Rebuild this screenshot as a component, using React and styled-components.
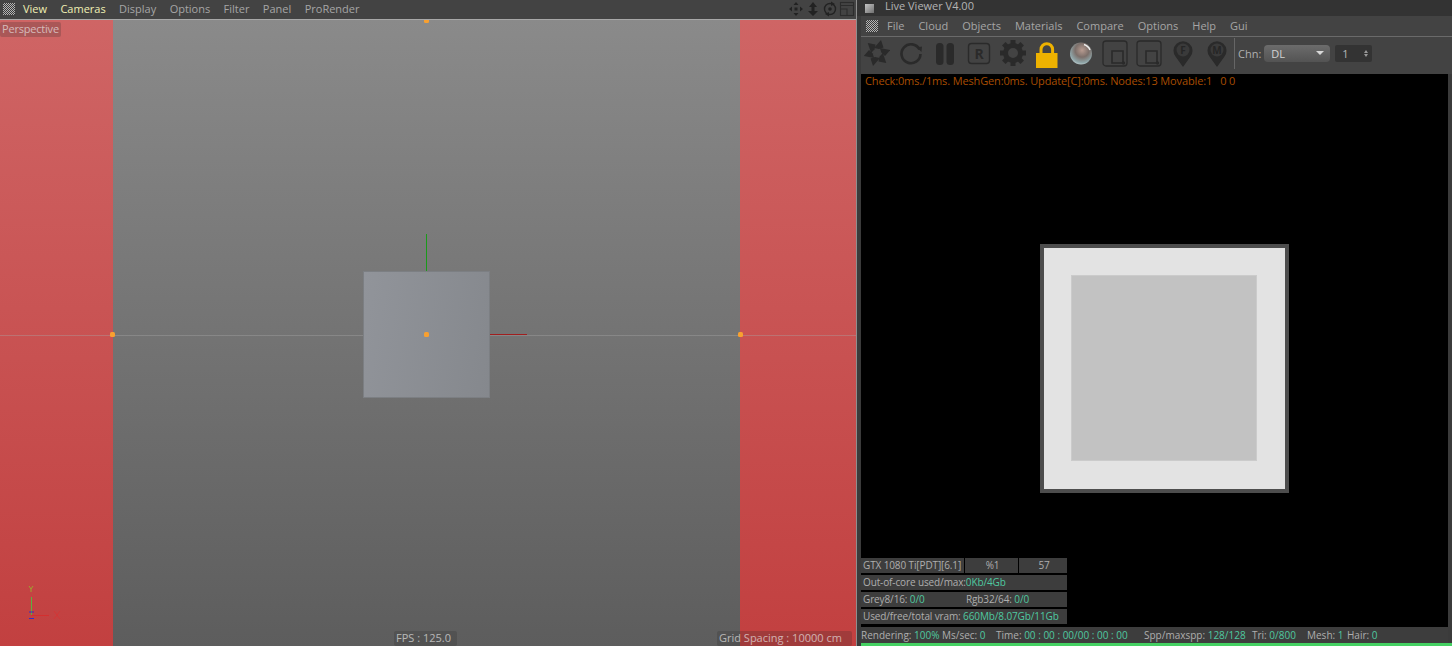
import styled, { createGlobalStyle } from "styled-components";

const GlobalStyle = createGlobalStyle`
  html, body {
    margin: 0;
    padding: 0;
    height: 646px;
    overflow: hidden;
    background: #3a3a3a;
  }
  * { box-sizing: border-box; }
`;

const Page = styled.div`
  display: flex;
  width: 1452px;
  height: 646px;
  font-family: "Open Sans", "Liberation Sans", sans-serif;
  font-size: 11px;
  color: #aaa;
  background: #3b3b3b;
`;

/* left: the 3d viewport */
const LeftPane = styled.div`
  display: flex;
  flex-direction: column;
  width: 857px;
  height: 646px;
  border-right: 1px solid #8e8e8e;
`;

const ViewMenu = styled.div`
  display: flex;
  align-items: center;
  height: 20px;
  padding: 0 1px 1px 3px;
  background: #434343;
  border-bottom: 1px solid #a8a8a8;
`;

const Grip = styled.div`
  width: 12px;
  height: 12px;
  flex: none;
  background: repeating-conic-gradient(#b4b4b4 0 25%, #3a3a3a 0 50%) 0 0 / 2px 2px;
`;

const MenuList = styled.div`
  display: flex;
  align-items: center;
  gap: ${(p) => p.$gap}px;
  margin-left: ${(p) => p.$left}px;
`;

const MenuItem = styled.span`
  color: ${(p) => (p.$active ? "#f0f0b4" : "#a6a6a6")};
  line-height: 16px;
  white-space: nowrap;
`;

const NavIcons = styled.div`
  display: flex;
  align-items: center;
  gap: 1px;
  margin-left: auto;
`;

const Viewport = styled.div`
  position: relative;
  flex: 1;
  display: flex;
  overflow: hidden;
`;

const Band = styled.div`
  width: ${(p) => p.$w}px;
  flex: none;
  background: linear-gradient(#cf6565, #c24040);
`;

const Stage = styled.div`
  flex: 1;
  background: linear-gradient(#8a8a8a, #5d5d5d);
`;

const SceneLayer = styled.svg`
  position: absolute;
  left: 0;
  top: 0;
`;

const Cube = styled.div`
  position: absolute;
  left: 363px;
  top: 251px;
  width: 127px;
  height: 127px;
  background: linear-gradient(100deg, #91949a, #85888d);
  border: 1px solid #7c7f83;
`;

const ViewTag = styled.div`
  position: absolute;
  height: 15px;
  line-height: 14px;
  padding: 0 2px;
  border-radius: 2px;
  background: rgba(40, 40, 40, 0.22);
  color: rgba(235, 235, 235, 0.68);
  white-space: nowrap;
  ${(p) => p.$css}
`;

/* right: the live viewer */
const RightPane = styled.div`
  display: flex;
  flex-direction: column;
  width: 595px;
  height: 646px;
  padding-left: 4px;
  background: #3b3b3b;
`;

const TitleBar = styled.div`
  display: flex;
  align-items: center;
  height: 16px;
  margin-left: -4px;
  padding-left: 8px;
  background: #333;
  color: #b4b4b4;
`;

const TitleIcon = styled.div`
  width: 9px;
  height: 9px;
  margin-right: 11px;
  background: linear-gradient(135deg, #c4c4c4, #707070);
`;

const TitleText = styled.span`
  line-height: 12px;
  margin-bottom: 4px;
`;

const ViewerMenu = styled.div`
  display: flex;
  align-items: center;
  height: 21px;
  padding-left: 5px;
  background: #434343;
  border-bottom: 1px solid #6a6a6a;
`;

const Toolbar = styled.div`
  display: flex;
  align-items: center;
  height: 37px;
  padding: 0 0 5px 3px;
  background: #434343;
`;

const ToolIcon = styled.svg`
  width: 26px;
  height: 30px;
  flex: none;
  margin-right: 8px;
`;

const ToolDivider = styled.div`
  width: 1px;
  height: 31px;
  margin-left: -4px;
  background: #666;
`;

const ChannelLabel = styled.span`
  margin-left: 3px;
  color: #b0b0b0;
`;

const Select = styled.div`
  display: flex;
  align-items: center;
  justify-content: space-between;
  width: 66px;
  height: 17px;
  margin-left: 3px;
  padding: 0 6px 0 7px;
  border-radius: 4px;
  background: linear-gradient(#6c6c6c, #535353);
  color: #d2d2d2;
`;

const Caret = styled.div`
  width: 0;
  height: 0;
  border-left: 4px solid transparent;
  border-right: 4px solid transparent;
  border-top: 4px solid #d8d8d8;
`;

const Spinner = styled.div`
  display: flex;
  align-items: center;
  justify-content: space-between;
  width: 37px;
  height: 17px;
  margin-left: 5px;
  padding: 0 4px 0 7px;
  background: #333;
  border-radius: 2px;
  color: #b8b8b8;
`;

const SpinArrows = styled.div`
  display: flex;
  flex-direction: column;
  gap: 1px;
  &::before, &::after {
    content: "";
    border-left: 2.5px solid transparent;
    border-right: 2.5px solid transparent;
  }
  &::before { border-bottom: 3px solid #999; }
  &::after { border-top: 3px solid #999; }
`;

const RenderArea = styled.div`
  position: relative;
  flex: 1;
  display: flex;
  align-items: center;
  justify-content: center;
  margin-right: 4px;
  padding: 36px 0 0 19px;
  background: #000;
`;

const LogLine = styled.div`
  position: absolute;
  left: 4px;
  top: 0;
  line-height: 13px;
  letter-spacing: -0.14px;
  color: #a84d00;
  white-space: pre;
`;

const RenderFrame = styled.div`
  display: flex;
  align-items: center;
  justify-content: center;
  width: 249px;
  height: 249px;
  border: 4px solid #4d4d4d;
  background: #e3e3e3;
`;

const RenderObject = styled.div`
  width: 186px;
  height: 186px;
  margin-bottom: 1px;
  background: #c2c2c2;
  border: 1px solid #cbcbcb;
`;

const StatPanel = styled.div`
  position: absolute;
  left: 0;
  bottom: 3px;
  display: flex;
  flex-direction: column;
  gap: 2px;
  width: 206px;
  font-size: 10px;
  letter-spacing: -0.12px;
`;

const StatRow = styled.div`
  display: flex;
  height: 15px;
  gap: ${(p) => p.$gap || 0}px;
`;

const StatCell = styled.div`
  width: ${(p) => (p.$w ? `${p.$w}px` : "auto")};
  flex: ${(p) => (p.$w ? "none" : 1)};
  padding-left: 2px;
  line-height: 15px;
  text-align: ${(p) => (p.$center ? "center" : "left")};
  white-space: nowrap;
  background: #3d3d3d;
  color: #aeaeae;
`;

const Value = styled.span`
  color: #4fc9a0;
`;

const StatusBar = styled.div`
  display: flex;
  align-items: center;
  height: 16px;
  padding-bottom: 1px;
  margin-right: 4px;
  font-size: 10px;
  color: #aeaeae;
  background: #3d3d3d;
  white-space: nowrap;
`;

const StatusItem = styled.span`
  width: ${(p) => p.$w}px;
  flex: none;
`;

const ProgressBar = styled.div`
  height: 3px;
  background: #44d062;
`;

function OctaneIcon() {
  return (
    <ToolIcon viewBox="0 0 26 30">
      {[0, 60, 120, 180, 240, 300].map((r) => (
        <path key={r} d="M10 10 L17 2 L19.5 9.500 L15 11 Z" fill="#2a2a2a" transform={`rotate(${r} 13 15)`} />
      ))}
      <path d="M13 11 L16.500 13 L16.500 17 L13 19 L9.500 17 L9.500 13 Z" fill="#434343" />
    </ToolIcon>
  );
}

function RefreshIcon() {
  return (
    <ToolIcon viewBox="0 0 26 30">
      <path d="M21.5 11.5 A9.5 9.5 0 1 0 22.5 16" fill="none" stroke="#2a2a2a" strokeWidth="2.6" />
      <path d="M19 9.5 L24 8.5 L23.5 14 Z" fill="#2a2a2a" />
    </ToolIcon>
  );
}

function PauseIcon() {
  return (
    <ToolIcon viewBox="0 0 26 30">
      <rect x="4" y="5" width="7.5" height="22" rx="3.5" fill="#2a2a2a" />
      <rect x="14.5" y="5" width="7.5" height="22" rx="3.5" fill="#2a2a2a" />
    </ToolIcon>
  );
}

function BoxIcon({ label }) {
  return (
    <ToolIcon viewBox="0 0 26 30">
      <rect x="2.5" y="5.5" width="21" height="20" rx="3" fill="none" stroke="#2a2a2a" strokeWidth="1.4" />
      <text x="13" y="20.5" textAnchor="middle" fontFamily="Open Sans, sans-serif" fontWeight="700" fontSize="14" fill="#2a2a2a">
        {label}
      </text>
    </ToolIcon>
  );
}

function GearIcon() {
  return (
    <ToolIcon viewBox="0 0 26 30">
      {[0, 45, 90, 135, 180, 225, 270, 315].map((r) => (
        <rect key={r} x="10.5" y="2" width="5" height="6" fill="#2a2a2a" transform={`rotate(${r} 13 15)`} />
      ))}
      <circle cx="13" cy="15" r="7.5" fill="none" stroke="#2a2a2a" strokeWidth="5" />
    </ToolIcon>
  );
}

function LockIcon() {
  return (
    <ToolIcon viewBox="0 0 26 30">
      <path d="M7 16 V11.500 a5.800 5.800 0 0 1 11.600 0 V16" fill="none" stroke="#eeb200" strokeWidth="3" />
      <rect x="2" y="15" width="21.500" height="15" fill="#eeb200" />
    </ToolIcon>
  );
}

function SphereIcon() {
  return (
    <ToolIcon viewBox="0 0 26 30">
      <defs>
        <radialGradient id="ball" cx="0.55" cy="0.35" r="0.7">
          <stop offset="0" stopColor="#b79b90" />
          <stop offset="0.45" stopColor="#7c6f6a" />
          <stop offset="0.8" stopColor="#8fa5a8" />
          <stop offset="1" stopColor="#c5d2d4" />
        </radialGradient>
      </defs>
      <circle cx="13" cy="15.5" r="11" fill="url(#ball)" />
      <path d="M16 6.5 A9.5 9.5 0 0 1 22 12" fill="none" stroke="#eee" strokeWidth="1.4" />
    </ToolIcon>
  );
}

function FrameIcon() {
  return (
    <ToolIcon viewBox="0 0 26 30">
      <rect x="1" y="3" width="24" height="25" rx="3" fill="none" stroke="#2a2a2a" strokeWidth="1.3" />
      <path d="M10 13 H21 V25 H10 Z" fill="none" stroke="#2a2a2a" strokeWidth="1.6" />
      <circle cx="21.5" cy="25" r="1.7" fill="#2a2a2a" />
    </ToolIcon>
  );
}

function PinIcon({ label }) {
  return (
    <ToolIcon viewBox="0 0 26 30">
      <path d="M13 29 L5.500 18.500 A9.500 9.500 0 1 1 20.500 18.500 Z" fill="#2a2a2a" />
      <circle cx="13" cy="12" r="6.500" fill="#3a3a3a" />
      <text x="13" y="15.5" textAnchor="middle" fontFamily="Open Sans, sans-serif" fontWeight="700" fontSize="10" fill="#262626">
        {label}
      </text>
    </ToolIcon>
  );
}

function NavMoveIcon() {
  return (
    <svg width="16" height="16" viewBox="0 0 16 16">
      <path d="M8 1 L10.5 4 H5.5 Z M8 15 L10.5 12 H5.5 Z M1 8 L4 5.5 V10.5 Z M15 8 L12 5.5 V10.5 Z" fill="#222" />
      <rect x="6.5" y="6.5" width="3" height="3" fill="#222" />
    </svg>
  );
}

function NavHeightIcon() {
  return (
    <svg width="16" height="16" viewBox="0 0 16 16">
      <path d="M8 1 L12 6 H9.5 V10 H13 L8 15 L3 10 H6.5 V6 H4 Z" fill="#222" />
    </svg>
  );
}

function NavRotateIcon() {
  return (
    <svg width="16" height="16" viewBox="0 0 16 16">
      <circle cx="8" cy="8" r="5.5" fill="none" stroke="#222" strokeWidth="1.4" />
      <circle cx="8" cy="8" r="1.8" fill="#222" />
      <path d="M9 0.5 L13 3 L9 5 Z M7 15.5 L3 13 L7 11 Z" fill="#222" />
    </svg>
  );
}

function NavLayoutIcon() {
  return (
    <svg width="16" height="16" viewBox="0 0 16 16">
      <rect x="1.5" y="1.5" width="13" height="13" fill="none" stroke="#2c2c2c" strokeWidth="1.1" />
      <path d="M1.5 4.500 H14.5 M1.5 8 H8 V14.500" fill="none" stroke="#2c2c2c" strokeWidth="1.1" />
    </svg>
  );
}

const viewMenu = ["View", "Cameras", "Display", "Options", "Filter", "Panel", "ProRender"];
const viewerMenu = ["File", "Cloud", "Objects", "Materials", "Compare", "Options", "Help", "Gui"];

function Scene() {
  const dots = [
    [112, 314],
    [426, 314],
    [740, 314],
    [426, 0],
  ];
  return (
    <SceneLayer width="856" height="626" viewBox="0 0 856 626">
      <line x1="0" y1="315.5" x2="363" y2="315.5" stroke="#a8a8a8" strokeOpacity="0.38" />
      <line x1="490" y1="315.5" x2="856" y2="315.5" stroke="#a8a8a8" strokeOpacity="0.38" />
      <line x1="426.5" y1="251" x2="426.5" y2="214" stroke="#1a9a1a" />
      <line x1="490" y1="314.5" x2="527" y2="314.5" stroke="#a01e1e" />
      {dots.map(([x, y]) => (
        <rect key={`${x}-${y}`} x={x - 2} y={y - 2} width="5" height="5" rx="1.5" fill="#f8a030" />
      ))}
      <line x1="31.5" y1="577" x2="31.5" y2="596" stroke="#5cb040" />
      <line x1="31" y1="595.5" x2="49" y2="595.5" stroke="#d42f2f" />
      <path d="M29 587 L31 590 V593 M33 587 L31 590" fill="none" stroke="#a0a030" transform="translate(0 -21)" />
      <path d="M54 591 L60 599 M60 591 L54 599" stroke="#d43636" fill="none" />
      <path d="M29 592 H34 M29 598.500 H34" stroke="#3030c8" />
    </SceneLayer>
  );
}

export default function App() {
  return (
    <>
      <GlobalStyle />
      <Page>
        <LeftPane>
          <ViewMenu>
            <Grip />
            <MenuList $gap={13.4} $left={8}>
              {viewMenu.map((m, i) => (
                <MenuItem key={m} $active={i < 2}>
                  {m}
                </MenuItem>
              ))}
            </MenuList>
            <NavIcons>
              <NavMoveIcon />
              <NavHeightIcon />
              <NavRotateIcon />
              <NavLayoutIcon />
            </NavIcons>
          </ViewMenu>
          <Viewport>
            <Band $w={113} />
            <Stage />
            <Band $w={116} />
            <Cube />
            <Scene />
            <ViewTag $css="left: 0; top: 2px; letter-spacing: -0.2px;">Perspective</ViewTag>
            <ViewTag $css="left: 394px; bottom: 0; width: 63px;">FPS : 125.0</ViewTag>
            <ViewTag $css="left: 717px; bottom: 0; width: 135px;">Grid Spacing : 10000 cm</ViewTag>
          </Viewport>
        </LeftPane>

        <RightPane>
          <TitleBar>
            <TitleIcon />
            <TitleText>Live Viewer V4.00</TitleText>
          </TitleBar>
          <ViewerMenu>
            <Grip />
            <MenuList $gap={14} $left={9}>
              {viewerMenu.map((m) => (
                <MenuItem key={m}>{m}</MenuItem>
              ))}
            </MenuList>
          </ViewerMenu>
          <Toolbar>
            <OctaneIcon />
            <RefreshIcon />
            <PauseIcon />
            <BoxIcon label="R" />
            <GearIcon />
            <LockIcon />
            <SphereIcon />
            <FrameIcon />
            <FrameIcon />
            <PinIcon label="F" />
            <PinIcon label="M" />
            <ToolDivider />
            <ChannelLabel>Chn:</ChannelLabel>
            <Select>
              DL
              <Caret />
            </Select>
            <Spinner>
              1
              <SpinArrows />
            </Spinner>
          </Toolbar>
          <RenderArea>
            <LogLine>Check:0ms./1ms. MeshGen:0ms. Update[C]:0ms. Nodes:13 Movable:1   0 0</LogLine>
            <RenderFrame>
              <RenderObject />
            </RenderFrame>
            <StatPanel>
              <StatRow $gap={1}>
                <StatCell $w={103}>GTX 1080 Ti[PDT][6.1]</StatCell>
                <StatCell $w={53} $center>
                  %1
                </StatCell>
                <StatCell $center>57</StatCell>
              </StatRow>
              <StatRow>
                <StatCell>
                  Out-of-core used/max:<Value>0Kb/4Gb</Value>
                </StatCell>
              </StatRow>
              <StatRow>
                <StatCell $w={103}>
                  Grey8/16: <Value>0/0</Value>
                </StatCell>
                <StatCell>
                  Rgb32/64: <Value>0/0</Value>
                </StatCell>
              </StatRow>
              <StatRow>
                <StatCell>
                  Used/free/total vram: <Value>660Mb/8.07Gb/11Gb</Value>
                </StatCell>
              </StatRow>
            </StatPanel>
          </RenderArea>
          <StatusBar>
            <StatusItem $w={81}>
              Rendering: <Value>100%</Value>
            </StatusItem>
            <StatusItem $w={54}>
              Ms/sec: <Value>0</Value>
            </StatusItem>
            <StatusItem $w={148}>
              Time: <Value>00 : 00 : 00/00 : 00 : 00</Value>
            </StatusItem>
            <StatusItem $w={108}>
              Spp/maxspp: <Value>128/128</Value>
            </StatusItem>
            <StatusItem $w={55}>
              Tri: <Value>0/800</Value>
            </StatusItem>
            <StatusItem $w={40}>
              Mesh: <Value>1</Value>
            </StatusItem>
            <StatusItem $w={40}>
              Hair: <Value>0</Value>
            </StatusItem>
          </StatusBar>
          <ProgressBar />
        </RightPane>
      </Page>
    </>
  );
}
